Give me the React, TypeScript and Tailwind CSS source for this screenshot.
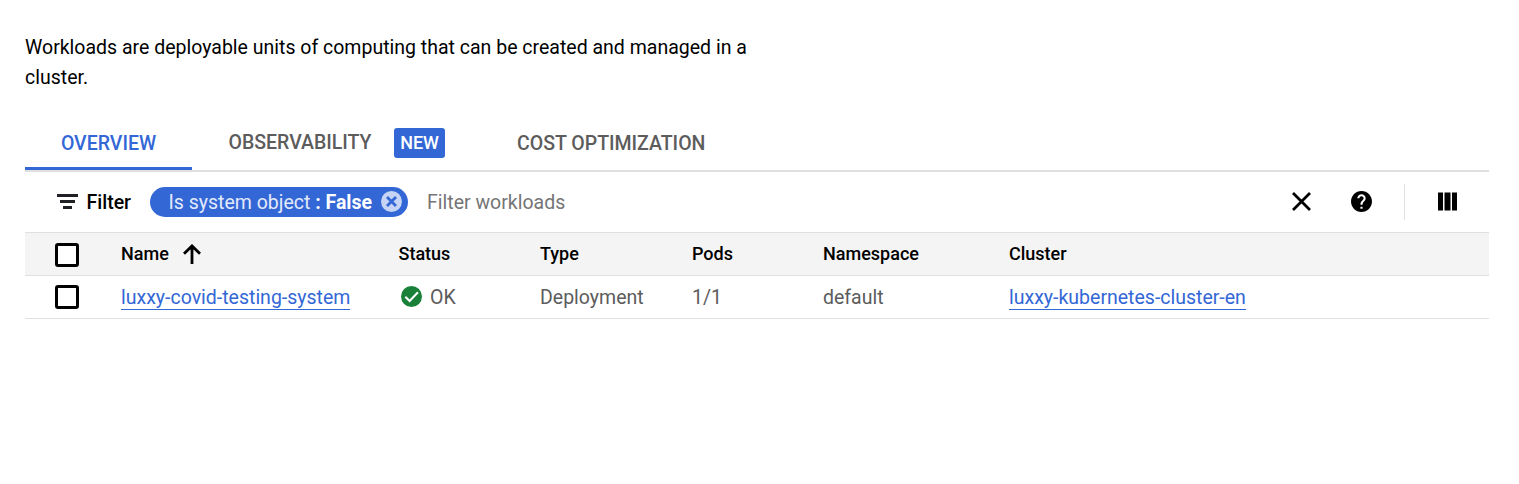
import React from "react";

const GRID =
  "grid grid-cols-[96px_277.5px_141.5px_152px_131px_186px_1fr] items-center border-b border-[#e0e0e0]";

function Checkbox({ className = "" }: { className?: string }) {
  return (
    <span
      role="checkbox"
      aria-checked="false"
      className={`ml-[30px] block size-6 rounded-[3px] border-3 border-black bg-white ${className}`}
    />
  );
}

function ArrowUp() {
  return (
    <svg className="ml-[14.5px] h-5 w-[18px]" viewBox="0 0 18 20" fill="none" stroke="#000" strokeWidth="2.8">
      <path d="M9 20V2M1 9.8L9 1.9L17 9.8" />
    </svg>
  );
}

function CheckCircle() {
  return (
    <svg className="mb-px ml-[2.5px] size-[21px]" viewBox="0 0 21 21">
      <circle cx="10.5" cy="10.5" r="10.5" fill="#188038" />
      <path d="M4.3 10.8L8.6 15L17 6.2" fill="none" stroke="#fff" strokeWidth="2.1" />
    </svg>
  );
}

function Link({ children }: { children: React.ReactNode }) {
  return (
    <a className="inline-block h-[26px] border-b border-[#3367d6] leading-[27px] text-[#3367d6]">{children}</a>
  );
}

export default function App() {
  return (
    <main className="min-h-[484px] bg-white pr-[30px] pl-[25px] font-['Roboto',sans-serif] text-[19.5px] text-black">
      <p className="h-[118px] w-[750px] pt-[33px] leading-[30px]">
        Workloads are deployable units of computing that can be created and managed in a cluster.
      </p>

      <nav className="flex h-[54px] border-b-2 border-[#e0e0e0] font-medium text-[#5c5c5c]">
        <a className="flex h-[52px] w-[167px] items-center justify-center border-b-3 border-[#3367d6] pt-0.5 text-[#3367d6]">
          OVERVIEW
        </a>
        <a className="flex h-[50px] w-[289px] items-center pl-[36.5px]">
          OBSERVABILITY
          <span className="ml-[22.5px] flex h-[30px] w-[51px] items-center justify-center rounded-[3px] bg-[#3367d6] pb-0.5 text-[18px] text-white">
            NEW
          </span>
        </a>
        <a className="flex h-[52px] items-center pl-9">COST OPTIMIZATION</a>
      </nav>

      <div className="flex h-[60px] items-center">
        <svg className="mb-px ml-8 h-[15px] w-[21px]" viewBox="0 0 21 15" fill="#202124">
          <path d="M0 0h21v3H0zM3 6h15v3H3zM6 12h9v3H6z" />
        </svg>
        <span className="ml-[8.5px] w-[63.5px] pt-0.5 font-medium">Filter</span>
        <div className="flex h-[30px] w-[258px] items-center rounded-full bg-[#3367d6] pl-[18.5px] text-white">
          <span className="pt-0.5 whitespace-pre text-[#e3eafa]">Is system object </span>
          <span className="pt-0.5 font-bold">: False</span>
          <svg className="mr-[6px] mb-px ml-auto size-[21px]" viewBox="0 0 21 21">
            <circle cx="10.5" cy="10.5" r="10.5" fill="#c6d4f5" />
            <path d="M6 6L15 15M15 6L6 15" stroke="#3367d6" strokeWidth="2.8" />
          </svg>
        </div>
        <span className="ml-[19px] pt-0.5 text-[#757575]">Filter workloads</span>
        <div className="ml-auto flex items-center">
          <svg className="mb-px size-[19px]" viewBox="0 0 19 19" stroke="#000" strokeWidth="2.8">
            <path d="M1 1L18 18M18 1L1 18" />
          </svg>
          <svg className="mb-px ml-10 size-[21px]" viewBox="2 2 20 20">
            <path d="M12 2C6.48 2 2 6.48 2 12s4.48 10 10 10 10-4.48 10-10S17.52 2 12 2zm1 17h-2v-2h2v2zm2.07-7.75l-.9.92C13.45 12.9 13 13.5 13 15h-2v-.5c0-1.1.45-2.1 1.17-2.83l1.24-1.26c.37-.36.59-.86.59-1.41 0-1.1-.9-2-2-2s-2 .9-2 2H8c0-2.21 1.79-4 4-4s4 1.79 4 4c0 .88-.36 1.68-.93 2.25z" />
          </svg>
          <span className="ml-8 h-9 w-px bg-[#e0e0e0]" />
          <svg className="mr-8 mb-px ml-[33px] h-[19px] w-[19px]" viewBox="0 0 19 19">
            <path d="M0 .5h5v18H0zM6.5 .5h6v18h-6zM14 .5h5v18h-5z" />
          </svg>
        </div>
      </div>

      <section>
        <div className={`${GRID} h-11 border-t bg-[#f4f4f4] text-[18px] font-medium`}>
          <Checkbox className="mt-0.5" />
          <span className="flex items-center">
            <span className="pb-0.5">Name</span>
            <ArrowUp />
          </span>
          <span className="pb-0.5">Status</span>
          <span className="pb-0.5">Type</span>
          <span className="pb-0.5">Pods</span>
          <span className="pb-0.5">Namespace</span>
          <span className="pb-0.5">Cluster</span>
        </div>
        <div className={`${GRID} h-[43px] text-[#5c5c5c]`}>
          <Checkbox />
          <span className="flex">
            <Link>luxxy-covid-testing-system</Link>
          </span>
          <span className="flex items-center">
            <CheckCircle />
            <span className="ml-2 pt-0.5">OK</span>
          </span>
          <span className="pt-0.5">Deployment</span>
          <span className="pt-0.5">1/1</span>
          <span className="pt-0.5">default</span>
          <span className="flex">
            <Link>luxxy-kubernetes-cluster-en</Link>
          </span>
        </div>
      </section>
    </main>
  );
}
